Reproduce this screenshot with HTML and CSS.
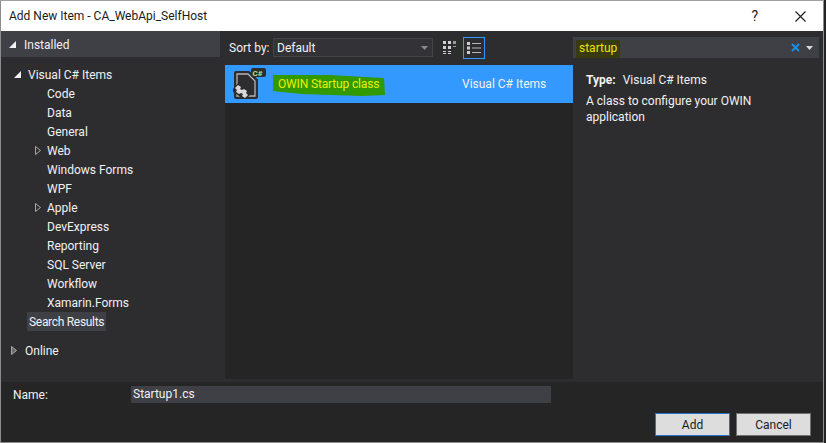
FILE: index.html
```html
<!DOCTYPE html>
<html lang="en">
<head>
<meta charset="utf-8">
<title>Add New Item</title>
<link rel="stylesheet" href="styles.css">
</head>
<body>
<div class="window">
  <header class="titlebar">
    <span class="title">Add New Item - CA_WebApi_SelfHost</span>
    <span class="help">?</span>
    <svg class="close" width="11" height="11" viewBox="0 0 11 11"><path d="M.5.5l10 10M10.500.5l-10 10" stroke="#1a1a1a" stroke-width="1.100" fill="none"/></svg>
  </header>
  <main class="main">
    <aside class="tree">
      <div class="tree-head"><svg class="arrow" width="7" height="7" viewBox="0 0 7 7"><path d="M7 0v7H0z" fill="#f1f1f1"/></svg><span>Installed</span></div>
      <div class="tree-root"><svg class="arrow" width="7" height="7" viewBox="0 0 7 7"><path d="M7 0v7H0z" fill="#f1f1f1"/></svg><span>Visual C# Items</span></div>
      <div class="node">Code</div>
      <div class="node">Data</div>
      <div class="node">General</div>
      <div class="node"><svg class="expander" width="6" height="9" viewBox="0 0 6 9"><path d="M.5.5l5 4-5 4z" fill="none" stroke="#a8a8a8"/></svg>Web</div>
      <div class="node">Windows Forms</div>
      <div class="node">WPF</div>
      <div class="node"><svg class="expander" width="6" height="9" viewBox="0 0 6 9"><path d="M.5.5l5 4-5 4z" fill="none" stroke="#a8a8a8"/></svg>Apple</div>
      <div class="node">DevExpress</div>
      <div class="node">Reporting</div>
      <div class="node">SQL Server</div>
      <div class="node">Workflow</div>
      <div class="node">Xamarin.Forms</div>
      <div class="search-results"><span>Search Results</span></div>
      <div class="tree-online"><svg class="arrow-online" width="6" height="9" viewBox="0 0 6 9"><path d="M.5.5l5 4-5 4z" fill="#6a6a6a" stroke="#a8a8a8"/></svg><span>Online</span></div>
    </aside>
    <section class="center">
      <div class="sortbar">
        <span class="sort-label">Sort by:</span>
        <div class="select"><span>Default</span><svg width="7" height="4" viewBox="0 0 7 4"><path d="M0 0h7L3.5 4z" fill="#8a8a8a"/></svg></div>
        <svg class="view" width="13" height="14" viewBox="0 0 13 14"><path fill="#d0d0d0" d="M0 0h3v3H0zM5 0h3v3H5zM0 5h3v3H0zM5 5h3v3H5zM0 10h3v1H0zM0 12h3v1H0zM5 10h3v1H5zM5 12h3v1H5z"/><path fill="#9a9a9a" d="M10 0h3v3h-3zM10 5h3v1h-3z"/></svg>
        <div class="view-active"><svg width="14" height="12" viewBox="0 0 14 12"><path fill="#d0d0d0" d="M0 0h3v3H0zM0 4.500h3v3H0zM0 9h3v3H0z"/><path fill="#b8b8b8" d="M5 1h9v1H5zM5 5.500h9v1H5zM5 10h9v1H5z"/></svg></div>
      </div>
      <div class="list">
        <div class="row">
          <svg class="row-icon" width="33" height="32" viewBox="0 0 33 32">
            <path d="M3 4h13l8 8v17a1 1 0 0 1-1 1H3a1 1 0 0 1-1-1V5a1 1 0 0 1 1-1z" fill="#2d2d30" stroke="#2d2d30" stroke-width="2" stroke-linejoin="round"/>
            <path d="M4 6h11l7 7v15H4z" fill="#2d2d30" stroke="#b4b4b4" stroke-width="1.300"/>
            <path d="M0 21l6-7 5 3 5 5 1 5-4 4-5-1-3-3-5-3z" fill="#2d2d30"/>
            <path d="M2 20l3-3 3 2-1 2 2 1 2-1 3 2-1 2 2 2-3 3-3-2 1-2-2-1-2 1-3-2 1-2z" fill="#d8d8d8"/>
            <rect x="18" y="0" width="15" height="9" rx="2" fill="#2d2d30"/>
            <text x="19.500" y="7.500" class="csharp">C#</text>
          </svg>
          <svg class="highlight" width="114" height="26" viewBox="0 0 114 26"><path d="M1 2h56l55 3 1 17-23 1-30-1-30-1-29-3z" fill="#339900"/></svg>
          <span class="row-name">OWIN Startup class</span>
          <span class="row-cat">Visual C# Items</span>
        </div>
      </div>
    </section>
    <aside class="details">
      <div class="search">
        <span class="search-text"><span class="search-mark">startup</span></span>
        <svg class="search-x" width="9" height="9" viewBox="0 0 9 9"><path d="M1 1l7 7M8 1L1 8" stroke="#1e90e8" stroke-width="1.800" fill="none"/></svg>
        <svg width="7" height="4" viewBox="0 0 7 4"><path d="M0 0h7L3.500 4z" fill="#d8d8d8"/></svg>
      </div>
      <div class="info">
        <p class="type"><b>Type:</b><span>Visual C# Items</span></p>
        <p class="desc">A class to configure your OWIN application</p>
      </div>
    </aside>
  </main>
  <footer class="footer">
    <div class="name-row">
      <label class="name-label">Name:</label>
      <div class="name-input">Startup1.cs</div>
    </div>
    <div class="buttons">
      <button class="btn btn-default">Add</button>
      <button class="btn">Cancel</button>
    </div>
  </footer>
</div>
</body>
</html>
```
FILE: styles.css
```css
* { box-sizing: border-box; }
html, body { margin: 0; padding: 0; }
body { width: 826px; height: 443px; overflow: hidden; background: #232323; font-family: Roboto, "Open Sans", sans-serif; font-size: 12px; }
.window { width: 824px; height: 443px; border: 1px solid #8c8c8c; border-top-color: #a0a0a0; display: flex; flex-direction: column; background: #2d2d30; color: #f1f1f1; }
.titlebar { height: 30px; flex: none; background: #fff; color: #1a1a1a; display: flex; align-items: center; padding: 0 17px 0 8px; }
.title { flex: 1; font-size: 12px; }
.help { font-size: 14px; margin-right: 37px; }
.main { height: 351px; flex: none; display: flex; }
.tree { width: 219px; flex: none; margin-right: 5px; }
.tree-head { height: 26px; background: #3f3f46; display: flex; align-items: center; padding: 1px 0 0 8px; gap: 8px; }
.tree-root { height: 19px; margin-top: 8px; display: flex; align-items: center; padding-left: 13px; gap: 7px; }
.node { height: 19px; line-height: 21px; padding-left: 46px; position: relative; }
.expander { position: absolute; left: 34px; top: 5px; }
.search-results { height: 19px; padding-left: 26px; }
.search-results span { display: inline-block; height: 19px; line-height: 21px; padding: 0 2px; background: #3f3f46; letter-spacing: -0.3px; }
.tree-online { display: flex; align-items: center; height: 19px; margin-top: 10px; padding-left: 10px; gap: 8px; }
.center { width: 348px; flex: none; display: flex; flex-direction: column; }
.sortbar { height: 34px; flex: none; display: flex; align-items: center; padding: 0 0 1px 4px; }
.sort-label { width: 44px; }
.select { width: 160px; height: 19px; border: 1px solid #434346; background: #333337; display: flex; align-items: center; justify-content: space-between; padding: 0 4px 0 3px; }
.view { margin-left: 10px; }
.view-active { width: 22px; height: 22px; border: 1px solid #3399ff; display: flex; align-items: center; justify-content: center; margin-left: 7px; }
.list { height: 314px; background: #252526; flex: none; }
.row { height: 38px; background: #3399ff; display: flex; align-items: center; position: relative; padding-left: 8px; }
.row-icon { flex: none; }
.csharp { font: bold 8px Roboto, sans-serif; fill: #a5e887; }
.highlight { position: absolute; left: 47px; top: 8px; }
.row-name { position: relative; margin-left: 12px; width: 184px; color: #e8f000; letter-spacing: -0.15px; }
.row-cat { color: #f1f1f1; }
.details { flex: 1; }
.search { width: 246px; height: 21px; margin-top: 6px; background: #3f3f46; display: flex; align-items: center; padding: 0 6px 0 3px; }
.search-text { flex: 1; }
.search-mark { display: inline-block; height: 18px; line-height: 16px; padding: 0 3px; margin-top: 3px; color: #e6e600; background: #3a3a12; }
.search-x { margin-right: 6px; }
.info { padding: 14px 0 0 13px; }
.type { margin: 0 0 5px; line-height: 16px; }
.type b { font-weight: 700; margin-right: 7px; }
.desc { margin: 0; line-height: 16px; width: 180px; }
.footer { flex: 1; background: #252526; }
.name-row { display: flex; align-items: center; padding: 4px 0 0 12px; }
.name-label { width: 118px; }
.name-input { width: 420px; height: 17px; line-height: 17px; background: #3f3f46; padding-left: 2px; }
.buttons { display: flex; justify-content: flex-end; gap: 6px; padding: 10px 12px 0 0; }
.btn { width: 75px; height: 23px; background: #dddddd; border: 1px solid #707070; font: 12px Roboto, sans-serif; color: #1a1a1a; padding: 0; }
.btn-default { border-color: #2277cc; }
```
